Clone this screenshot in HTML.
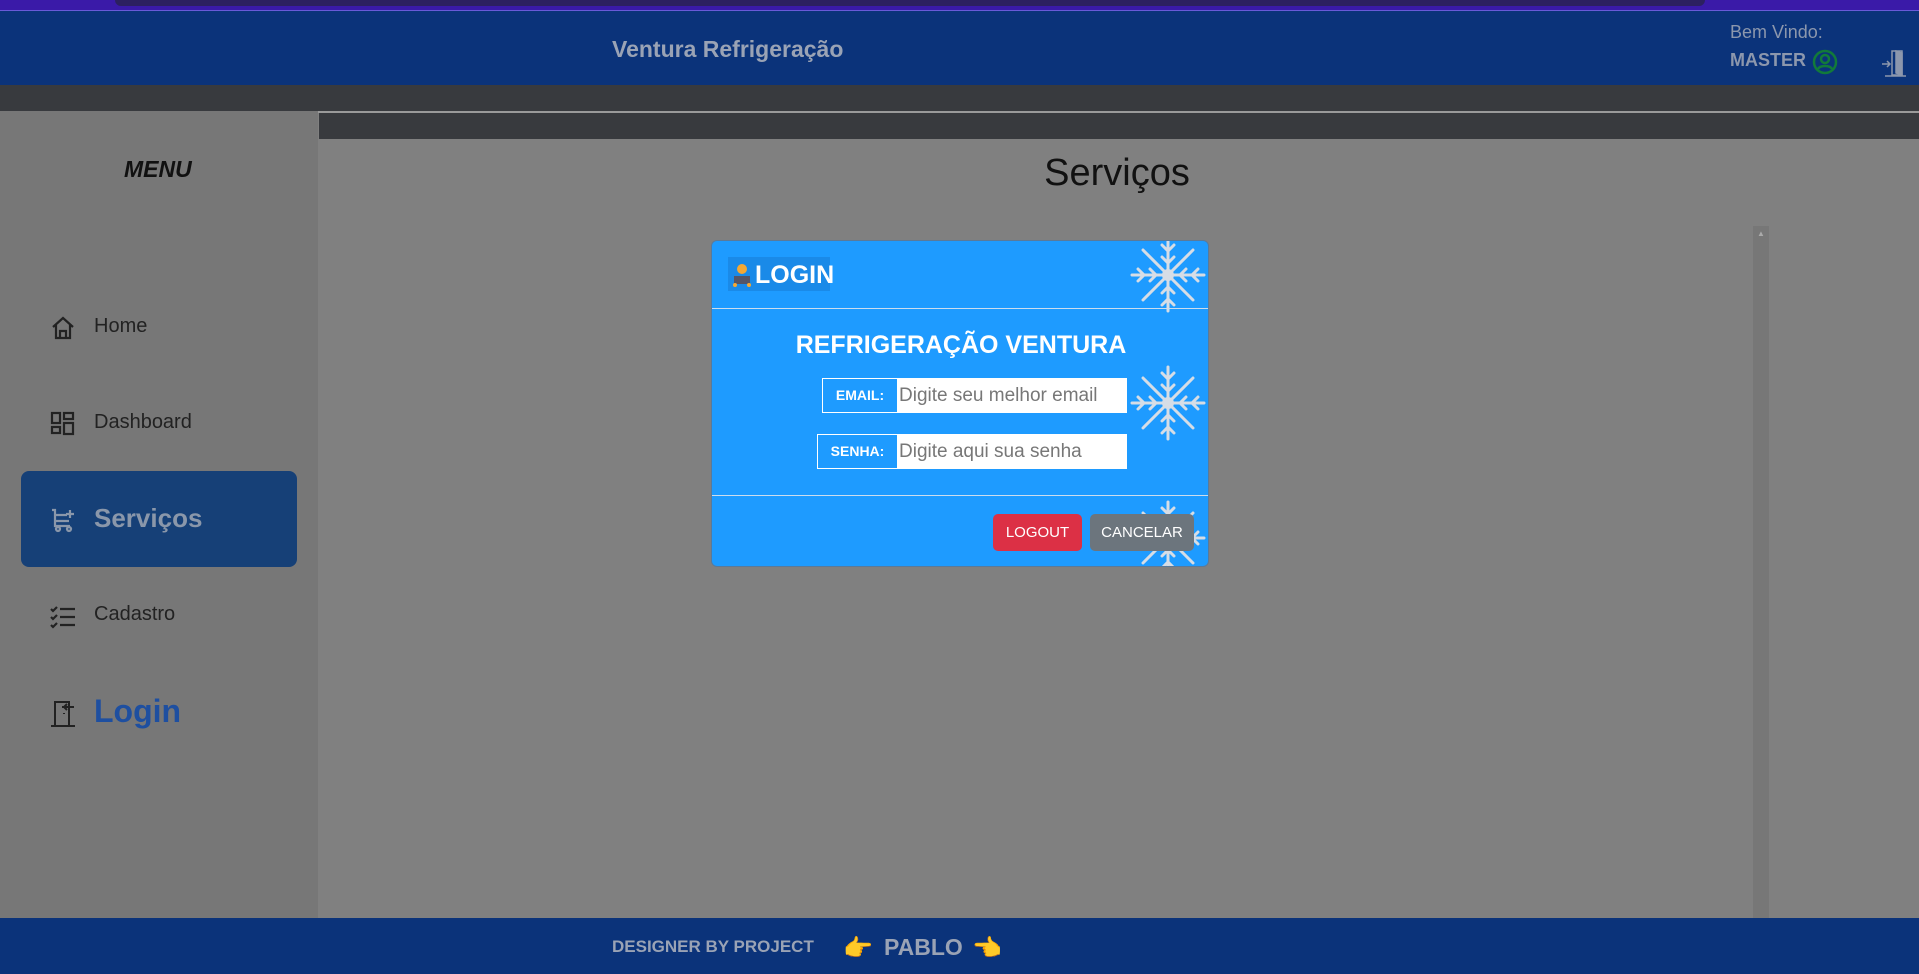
<!DOCTYPE html>
<html><head><meta charset="utf-8">
<style>
*{margin:0;padding:0;box-sizing:border-box}
body{width:1919px;height:974px;overflow:hidden;position:relative;background:#808080;font-family:"Liberation Sans","DejaVu Sans",sans-serif}
.a{position:absolute}
</style></head><body>
<div class="a" style="left:0;top:0;width:1919px;height:10px;background:#3a1aa8"></div>
<div class="a" style="left:115px;top:0;width:1590px;height:6px;background:#2c2060;border-radius:0 0 12px 12px"></div>
<div class="a" style="left:0;top:10px;width:1919px;height:75px;background:#0b337a;border-top:1px solid #6a5ad8"></div>
<div class="a" style="left:612px;top:36px;font-size:23px;font-weight:bold;color:#9aa3b5">Ventura Refrigeração</div>
<div class="a" style="left:1730px;top:22px;font-size:18px;color:#8c97ad">Bem Vindo:</div>
<div class="a" style="left:1730px;top:50px;font-size:18px;font-weight:bold;color:#8c97ad">MASTER</div>
<svg class="a" style="left:1812px;top:49px" width="26" height="26" viewBox="0 0 26 26" fill="none" stroke="#127a3a" stroke-width="2.5"><circle cx="13" cy="13" r="11"/><circle cx="13" cy="10" r="4"/><path d="M6 20c2-4 12-4 14 0"/></svg>
<svg class="a" style="left:1880px;top:48px" width="28" height="30" viewBox="0 0 28 30" fill="none" stroke="#8c97ad" stroke-width="1.5"><path d="M12 3h10v24H12z"/><path d="M16 3l6 2v22l-6-2z" fill="#8c97ad"/><path d="M2 16h8M7 13l3 3-3 3M5 28h21"/></svg>
<div class="a" style="left:0;top:85px;width:1919px;height:26px;background:#383a3e"></div>
<div class="a" style="left:0;top:111px;width:318px;height:807px;background:#777"></div>
<div class="a" style="left:318px;top:111px;width:1601px;height:2px;background:#9a9a9a"></div>
<div class="a" style="left:319px;top:113px;width:1600px;height:26px;background:#383a3e"></div>
<div class="a" style="left:124px;top:156px;font-size:23px;font-weight:bold;font-style:italic;color:#111">MENU</div>
<svg class="a" style="left:50px;top:315px" width="26" height="26" viewBox="0 0 26 26" fill="none" stroke="#222" stroke-width="2.2"><path d="M3 12L13 3l10 9M6 10v13h14V10M10 23v-7h6v7"/></svg>
<div class="a" style="left:94px;top:315px;font-size:20px;color:#222">Home</div>
<svg class="a" style="left:50px;top:411px" width="25" height="25" viewBox="0 0 25 25" fill="none" stroke="#222" stroke-width="2.2"><rect x="2" y="2" width="8" height="10"/><rect x="2" y="16" width="8" height="6"/><rect x="14" y="2" width="9" height="6"/><rect x="14" y="12" width="9" height="11"/></svg>
<div class="a" style="left:94px;top:411px;font-size:20px;color:#222">Dashboard</div>
<div class="a" style="left:21px;top:471px;width:276px;height:96px;background:#164077;border-radius:8px"></div>
<svg class="a" style="left:50px;top:507px" width="26" height="26" viewBox="0 0 26 26" fill="none" stroke="#8a97aa" stroke-width="2.2"><path d="M2 3h3v16h15M5 8h12M5 14h14M20 3v8M16 7h8"/><circle cx="8" cy="22" r="2"/><circle cx="19" cy="22" r="2"/></svg>
<div class="a" style="left:94px;top:503px;font-size:26px;font-weight:bold;color:#8a97aa">Serviços</div>
<svg class="a" style="left:50px;top:605px" width="26" height="24" viewBox="0 0 26 24" fill="none" stroke="#222" stroke-width="2.2"><path d="M1 4l2 2 4-4M1 12l2 2 4-4M1 20l2 2 4-4M10 4h15M10 12h15M10 20h15"/></svg>
<div class="a" style="left:94px;top:603px;font-size:20px;color:#222">Cadastro</div>
<svg class="a" style="left:50px;top:699px" width="27" height="28" viewBox="0 0 27 28" fill="none" stroke="#222" stroke-width="2"><path d="M1 27h24M5 27V3h14v24M14 14v1M12 8h12M17 5l-3 3 3 3"/></svg>
<div class="a" style="left:94px;top:693px;font-size:32px;font-weight:bold;color:#1e4fa0">Login</div>
<div class="a" style="left:1000px;top:152px;width:234px;text-align:center;font-size:38px;color:#111">Serviços</div>
<div class="a" style="left:1753px;top:226px;width:16px;height:692px;background:#777"></div>
<div class="a" style="left:1757px;top:229px;font-size:8px;color:#aaa">▲</div>
<div class="a" style="left:711px;top:240px;width:498px;height:327px;background:#1e9bff;border-radius:6px;border:1px solid #5a7a9a;overflow:hidden">
 <div class="a" style="left:16px;top:16px;width:102px;height:34px;background:#1a8ae8"></div>
 <svg class="a" style="left:20px;top:22px" width="20" height="26" viewBox="0 0 20 26"><circle cx="10" cy="6" r="5" fill="#f5a833"/><rect x="2" y="13" width="16" height="8" fill="#556"/><circle cx="3" cy="22" r="2" fill="#f5a833"/><circle cx="17" cy="22" r="2" fill="#f5a833"/></svg>
 <div class="a" style="left:43px;top:20px;font-size:25px;font-weight:bold;color:#fff">LOGIN</div>
 <div class="a" style="left:0;top:67px;width:498px;height:1px;background:#cde"></div>
 <div class="a" style="left:0;top:90px;width:498px;text-align:center;font-size:25px;font-weight:bold;color:#fff">REFRIGERAÇÃO VENTURA</div>
 <div class="a" style="left:110px;top:137px;width:305px;height:35px;border:1px solid #fff;background:#1e9bff">
  <div class="a" style="left:0;top:0;width:74px;height:33px;line-height:33px;text-align:center;font-size:14px;font-weight:bold;color:#fff">EMAIL:</div>
  <div class="a" style="left:74px;top:0;width:229px;height:33px;background:#fff;line-height:33px;padding-left:2px;font-size:19px;color:#777">Digite seu melhor email</div>
 </div>
 <div class="a" style="left:105px;top:193px;width:310px;height:35px;border:1px solid #fff;background:#1e9bff">
  <div class="a" style="left:0;top:0;width:79px;height:33px;line-height:33px;text-align:center;font-size:14px;font-weight:bold;color:#fff">SENHA:</div>
  <div class="a" style="left:79px;top:0;width:229px;height:33px;background:#fff;line-height:33px;padding-left:2px;font-size:19px;color:#777">Digite aqui sua senha</div>
 </div>
 <div class="a" style="left:0;top:254px;width:498px;height:1px;background:#cde"></div>
 <svg class="a" style="left:418px;top:0" width="80" height="327" viewBox="0 0 80 327" fill="none" stroke="#d6dde6" stroke-width="3" stroke-linecap="round">
  <defs><g id="f"><path d="M0-36V36M-36 0H36M-25-25L25 25M-25 25L25-25"/><path d="M-6-30L0-24L6-30M-6 30L0 24L6 30M-30-6L-24 0L-30 6M30-6L24 0L30 6M-6-18L0-12L6-18M-6 18L0 12L6 18M-18-6L-12 0L-18 6M18-6L12 0L18 6"/><circle r="6" fill="#d6dde6" stroke="none"/></g></defs>
  <use href="#f" x="38" y="34"/><use href="#f" x="38" y="162"/><use href="#f" x="38" y="297"/>
 </svg>
 <div class="a" style="left:281px;top:273px;width:89px;height:37px;background:#dc3045;border-radius:5px;color:#fff;font-size:15px;line-height:37px;text-align:center">LOGOUT</div>
 <div class="a" style="left:378px;top:273px;width:104px;height:37px;background:#6c757d;border-radius:5px;color:#fff;font-size:15px;line-height:37px;text-align:center">CANCELAR</div>
</div>
<div class="a" style="left:0;top:918px;width:1919px;height:56px;background:#0b337a"></div>
<div class="a" style="left:612px;top:937px;font-size:17px;font-weight:bold;color:#9aa3b5">DESIGNER BY PROJECT</div>
<div class="a" style="left:843px;top:934px;font-size:24px;color:#5a3a20">👉</div>
<div class="a" style="left:884px;top:934px;font-size:23px;font-weight:bold;color:#9aa3b5">PABLO</div>
<div class="a" style="left:972px;top:934px;font-size:24px;color:#5a3a20">👈</div>
</body></html>
